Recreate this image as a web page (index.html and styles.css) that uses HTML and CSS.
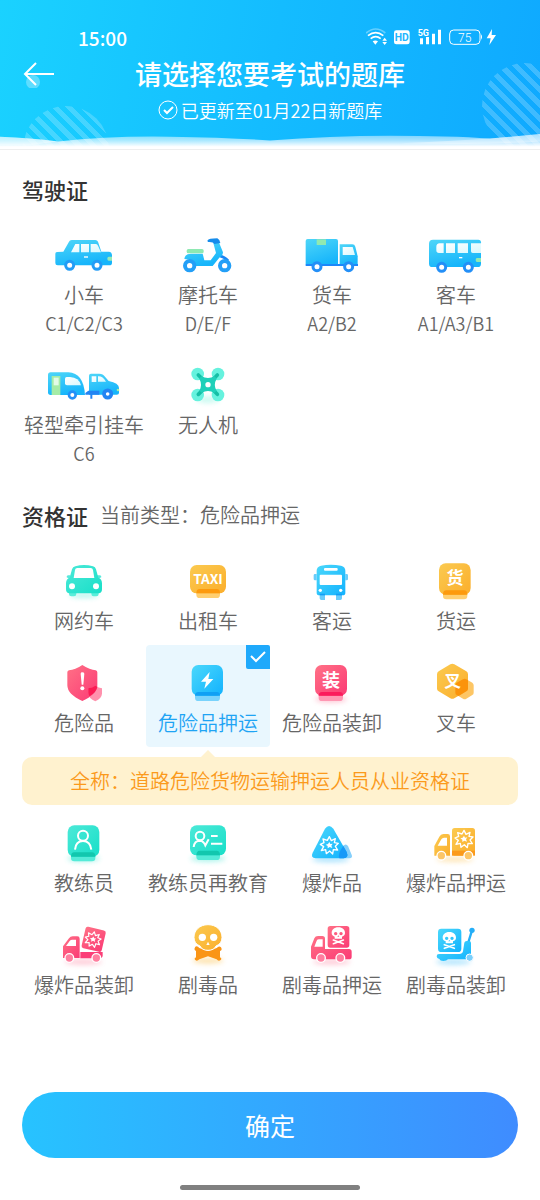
FILE: index.html
```html
<!DOCTYPE html>
<html lang="zh-CN">
<head>
    <meta charset="UTF-8">
    <meta name="viewport" content="width=device-width, initial-scale=1.0">
    <title>选择题库</title>
    <link rel="stylesheet" href="styles.css">
</head>
<body>
    <!-- Shared gradients and glyphs -->
    <svg class="defs" width="0" height="0" aria-hidden="true">
        <defs>
            <linearGradient id="blue" x1="0" y1="0" x2="0.4" y2="1"><stop offset="0" stop-color="#4fd6f8"/><stop offset="1" stop-color="#17b5fb"/></linearGradient>
            <linearGradient id="sky" x1="0" y1="0" x2="1" y2="1"><stop offset="0" stop-color="#4bd8fb"/><stop offset="1" stop-color="#12b2fe"/></linearGradient>
            <linearGradient id="teal" x1="0" y1="0" x2="1" y2="1"><stop offset="0" stop-color="#4ce9d8"/><stop offset="1" stop-color="#18dfc8"/></linearGradient>
            <linearGradient id="gold" x1="0" y1="0" x2="1" y2="1"><stop offset="0" stop-color="#fbca50"/><stop offset="1" stop-color="#fbae2c"/></linearGradient>
            <linearGradient id="red" x1="0" y1="0" x2="1" y2="1"><stop offset="0" stop-color="#ff7186"/><stop offset="1" stop-color="#fb3a75"/></linearGradient>
            <linearGradient id="glass" x1="0" y1="0" x2="1" y2="1"><stop offset="0" stop-color="#fff"/><stop offset="1" stop-color="#d8f8fd"/></linearGradient>
            <filter id="soft" x="-50%" y="-100%" width="200%" height="300%"><feGaussianBlur stdDeviation="8"/></filter>
            <g id="burst">
                <path d="M0-26 6-14 18-20 15-8 27-6 18 3 25 14 12 13 10 26 1 17-9 25-11 13-24 16-17 4-27-3-16-8-19-19-6-15Z" fill="none" stroke="#fff" stroke-width="4" stroke-linejoin="round"/>
                <path d="M0-10 3-4 10-5 6 1 9 8 1 5-5 9-5 2-11-2-4-4Z" fill="#fff"/>
            </g>
            <g id="skull">
                <path fill="#fff" fill-rule="evenodd" d="M0-20C13-20 20-12 20-3Q20 5 11 8V14H-11V8Q-20 5-20-3C-20-12-13-20 0-20ZM-8-6a5 5 0 1 0 .1 0ZM8-6a5 5 0 1 0 .1 0ZM0 4-3 8H3Z"/>
                <path d="M-15 18 15 29M15 18-15 29" stroke="#fff" stroke-width="5" stroke-linecap="round"/>
            </g>
        </defs>
    </svg>

    <header class="header">
        <span class="circle circle-left"></span>
        <span class="circle circle-right"></span>
        <svg class="wave" viewBox="0 0 540 18" preserveAspectRatio="none" aria-hidden="true">
            <defs>
                <linearGradient id="foam" x1="0" y1="0" x2="0" y2="1"><stop offset="0.1" stop-color="#fff" stop-opacity="0.45"/><stop offset="0.45" stop-color="#fff" stop-opacity="0.65"/><stop offset="0.85" stop-color="#fff"/></linearGradient>
            </defs>
            <path d="M0 5Q30 6 58 10Q110 4 170 5Q230 6 270 9Q330 4 390 4Q450 4 490 7L540 2V18H0Z" fill="url(#foam)"/>
            <path d="M0 5Q30 6 58 10L30 14H0ZM400 12Q450 10 490 7L540 2V10Q480 14 400 12Z" fill="#fff" opacity="0.4"/>
        </svg>
        <div class="status-bar">
            <span class="time">15:00</span>
            <svg width="132" height="20" viewBox="288 78 396 60" role="img" aria-label="状态">
                <g fill="none" stroke="#fff" stroke-width="5">
                    <path d="M288 96Q317 72 346 96" opacity="0.35"/>
                    <path d="M294 104Q317 86 340 104M302 113Q317 101 332 113"/>
                </g>
                <path d="M308 121Q316 116 324 121L316 131ZM337 119 344 110 351 119ZM337 123H351L344 132Z" fill="#fff"/>
                <rect x="372" y="88" width="47" height="42" rx="7" fill="#fff"/>
                <text class="status-text" x="395" y="121" font-size="31" font-weight="700" fill="#22b5ff">HD</text>
                <text class="status-text" x="460" y="104" font-size="27" font-weight="700" fill="#fff">5G</text>
                <path d="M450 112h9v18h-9zM468 108h9v22h-9zM486 98h9v32h-9zM504 86h9v44h-9z" fill="#fff"/>
                <rect x="539" y="87" width="91" height="43" rx="12" fill="none" stroke="#fff" stroke-width="3"/>
                <path d="M633 100q6 8 0 16z" fill="#fff"/>
                <text class="status-text" x="584" y="122" font-size="36" fill="#fff">75</text>
                <path d="M666 84 650 112H662L658 132 678 102H665Z" fill="#fff"/>
            </svg>
        </div>
        <div class="title-row">
            <a class="back" href="#" aria-label="返回">
                <svg width="32" height="28" viewBox="0 0 32 28">
                    <circle cx="10" cy="22" r="7" fill="#fff" opacity="0.3"/>
                    <path d="M13 3 2 14 13 25M2 14H31" fill="none" stroke="#fff" stroke-width="2"/>
                </svg>
            </a>
            <h1>请选择您要考试的题库</h1>
        </div>
        <p class="update">
            <svg width="20" height="20" viewBox="0 0 20 20" aria-hidden="true">
                <circle cx="10" cy="10" r="9" fill="none" stroke="#fff" stroke-width="1"/>
                <path d="M6 10 9 13 15 7" fill="none" stroke="#fff" stroke-width="2"/>
            </svg>
            已更新至01月22日新题库
        </p>
    </header>

    <main>
        <section>
            <h2>驾驶证</h2>
            <div class="grid">
                <button type="button" class="item">
                    <svg class="icon" viewBox="72 24 240 132" aria-hidden="true">
                        <path d="M106 86Q106 82 111 81L130 80 147 50Q149 45 155 45H226Q232 45 234 50L244 80H266Q276 81 276 91V113Q276 121 268 121H113Q106 121 106 114Z" fill="url(#blue)"/>
                        <path d="M166 57H178V82H153ZM183 57H207V82H183ZM212 57H228Q232 57 234 62L243 82H212Z" fill="url(#glass)"/>
                        <path d="M192 94H204V98H192Z" fill="#fff"/>
                        <path d="M276 95V107H266Q262 107 262 101T266 95Z" fill="#98e9b6"/>
                        <circle cx="149" cy="121" r="12" fill="#fff" stroke="#239cf6" stroke-width="9"/>
                        <circle cx="231" cy="121" r="12" fill="#fff" stroke="#239cf6" stroke-width="9"/>
                    </svg>
                    <span class="name">小车</span>
                    <span class="code">C1/C2/C3</span>
                </button>
                <button type="button" class="item">
                    <svg class="icon" viewBox="444 24 240 132" aria-hidden="true">
                        <path d="M598 92Q614 96 624 108" fill="none" stroke="#1885f5" stroke-width="9"/>
                        <path d="M493 102Q495 86 513 86H548L553 106H572L588 84 580 54 596 50 609 82Q609 92 599 97L578 123H527Q521 102 493 102Z" fill="url(#blue)"/>
                        <rect x="500" y="72" width="51" height="13" rx="5" fill="#8ee9b2"/>
                        <path d="M562 47Q566 40 592 40Q601 45 601 54L583 57Q580 50 564 51Z" fill="#168ceb"/>
                        <circle cx="509" cy="122" r="14" fill="#fff" stroke="#239ff7" stroke-width="12"/>
                        <circle cx="614" cy="122" r="14" fill="#fff" stroke="#239ff7" stroke-width="12"/>
                    </svg>
                    <span class="name">摩托车</span>
                    <span class="code">D/E/F</span>
                </button>
                <button type="button" class="item">
                    <svg class="icon" viewBox="66 24 240 132" aria-hidden="true">
                        <rect x="107" y="42" width="97" height="80" rx="6" fill="url(#blue)"/>
                        <path d="M209 58H247Q254 58 256 65L263 94V122H209Z" fill="url(#blue)"/>
                        <path d="M218 66H248L255 90H218Z" fill="url(#glass)"/>
                        <path d="M140 43H168V60H140Z" fill="#91e9b0"/>
                        <path d="M107 117H264V123H107Z" fill="#1c87fa"/>
                        <circle cx="141" cy="125" r="12" fill="#fff" stroke="#238ff7" stroke-width="9"/>
                        <circle cx="236" cy="125" r="12" fill="#fff" stroke="#238ff7" stroke-width="9"/>
                    </svg>
                    <span class="name">货车</span>
                    <span class="code">A2/B2</span>
                </button>
                <button type="button" class="item">
                    <svg class="icon" viewBox="438 24 240 132" aria-hidden="true">
                        <path d="M489 44H625Q633 44 633 52V116Q633 126 623 126H487Q477 126 477 116V56Q477 44 489 44Z" fill="url(#blue)"/>
                        <path d="M509 55H521V84H507Q499 84 499 76V66Q499 55 509 55ZM528 55H555V84H528ZM563 55H594V84H563ZM603 55H633V84H608Q603 84 603 79Z" fill="url(#glass)"/>
                        <path d="M567 96H577V100H567Z" fill="#fff"/>
                        <path d="M633 99V111H621Q617 111 617 105T621 99Z" fill="#91e9b0"/>
                        <circle cx="515" cy="127" r="12" fill="#fff" stroke="#238ff7" stroke-width="9"/>
                        <circle cx="595" cy="127" r="12" fill="#fff" stroke="#238ff7" stroke-width="9"/>
                    </svg>
                    <span class="name">客车</span>
                    <span class="code">A1/A3/B1</span>
                </button>
                <button type="button" class="item">
                    <svg class="icon" viewBox="72 24 240 132" aria-hidden="true">
                        <path d="M92 52H145Q191 54 195 120H92Q84 120 84 112V60Q84 52 92 52Z" fill="url(#blue)"/>
                        <path d="M95 63H121V120H95Z" fill="#a5eca7"/>
                        <path d="M101 68H116V91H101Z" fill="#e2fbe6"/>
                        <path d="M140 66H150Q177 67 183 91H141Q135 91 135 85V71Q135 66 140 66Z" fill="url(#glass)"/>
                        <path d="M213 56H238Q249 56 255 65L266 78Q297 84 297 99V114Q297 119 290 119H207V62Q207 56 213 56Z" fill="url(#blue)"/>
                        <path d="M215 64H229V81H215ZM234 64Q248 63 258 80H234Z" fill="url(#glass)"/>
                        <path d="M196 119V114L205 107H238V119H217V131H211V119Z" fill="#2384f3"/>
                        <circle cx="294" cy="105" r="4" fill="#a5eca7"/>
                        <circle cx="157" cy="120" r="10" fill="#fff" stroke="#238ff7" stroke-width="8"/>
                        <circle cx="263" cy="117" r="11" fill="#fff" stroke="#2384f3" stroke-width="11"/>
                    </svg>
                    <span class="name">轻型牵引挂车</span>
                    <span class="code">C6</span>
                </button>
                <button type="button" class="item">
                    <svg class="icon" viewBox="444 24 240 132" aria-hidden="true">
                        <ellipse cx="564" cy="134" rx="34" ry="10" fill="#7df3dc" opacity="0.4" filter="url(#soft)"/>
                        <g fill="#66f2de">
                            <circle cx="533" cy="57" r="19"/><circle cx="594" cy="57" r="19"/>
                            <circle cx="533" cy="120" r="19"/><circle cx="594" cy="120" r="19"/>
                        </g>
                        <path d="M535 60 564 89 592 60M535 118 564 89 592 118" fill="none" stroke="#15bfa6" stroke-width="11" stroke-linecap="round"/>
                        <path d="M544 64Q564 74 584 64L590 71Q579 89 590 107L583 113Q564 103 545 113L538 107Q548 89 538 71Z" fill="#1fd0b9"/>
                        <circle cx="564" cy="89" r="8" fill="#fff"/>
                    </svg>
                    <span class="name">无人机</span>
                </button>
            </div>
        </section>

        <section>
            <h2>资格证 <small>当前类型：危险品押运</small></h2>
            <div class="grid">
                <button type="button" class="item">
                    <svg class="icon" viewBox="72 27 240 132" aria-hidden="true">
                        <ellipse cx="192" cy="136" rx="44" ry="8" fill="#4fe8d5" opacity="0.4" filter="url(#soft)"/>
                        <path d="M147 122H169V132Q169 139 162 139H154Q147 139 147 132ZM214 122H236V132Q236 139 229 139H221Q214 139 214 132Z" fill="#5aeeda"/>
                        <path d="M152 76H145Q139 76 140 82L149 87ZM230 76H239Q245 76 244 82L234 87Z" fill="#58e9dc"/>
                        <path d="M166 49Q192 41 219 49Q226 51 228 58L235 83Q246 87 246 100V118Q246 129 236 130H148Q138 129 138 118V100Q138 87 149 83L156 58Q158 51 166 49Z" fill="url(#teal)"/>
                        <path d="M172 54H212Q218 54 219 60L223 84H161L165 60Q166 54 172 54Z" fill="#fff"/>
                        <circle cx="156" cy="109" r="9" fill="#fff"/><circle cx="228" cy="109" r="9" fill="#fff"/>
                    </svg>
                    <span class="name">网约车</span>
                </button>
                <button type="button" class="item">
                    <svg class="icon" viewBox="444 27 240 132" aria-hidden="true">
                        <rect x="529" y="112" width="71" height="32" rx="10" fill="#ffcf70"/>
                        <rect x="510" y="45" width="108" height="85" rx="20" fill="url(#gold)"/>
                        <path d="M539 117H590Q600 117 600 130H529Q529 117 539 117Z" fill="#fd9a0d"/>
                        <text class="icon-text" x="564" y="102" font-size="41">TAXI</text>
                    </svg>
                    <span class="name">出租车</span>
                </button>
                <button type="button" class="item">
                    <svg class="icon" viewBox="66 27 240 132" aria-hidden="true">
                        <path d="M131 76Q131 72 135 72H140V91H135Q131 91 131 87ZM226 72H230Q234 72 234 76V87Q234 91 230 91H226ZM149 130H165V150H154Q149 150 149 145ZM198 130H216V145Q216 150 211 150H198Z" fill="#69ccfb"/>
                        <path d="M153 47Q182 41 213 47Q226 50 226 62V128Q226 136 218 136H148Q140 136 140 128V62Q140 50 153 47Z" fill="url(#sky)"/>
                        <path d="M149 131H165V136H149ZM198 131H216V136H198Z" fill="#119df6"/>
                        <rect x="162" y="54" width="41" height="8" rx="3" fill="#fff"/>
                        <rect x="149" y="74" width="67" height="31" rx="3" fill="#fff"/>
                        <circle cx="151" cy="121" r="5" fill="#fff"/><circle cx="212" cy="121" r="5" fill="#fff"/>
                    </svg>
                    <span class="name">客运</span>
                </button>
                <button type="button" class="item">
                    <svg class="icon" viewBox="438 27 240 132" aria-hidden="true">
                        <rect x="519" y="112" width="73" height="36" rx="10" fill="#ffcf70"/>
                        <rect x="507" y="40" width="95" height="94" rx="20" fill="url(#gold)"/>
                        <path d="M529 121H582Q592 121 592 134H519Q519 121 529 121Z" fill="#fd9a0d"/>
                        <text class="icon-text" x="555" y="103" font-size="51">货</text>
                    </svg>
                    <span class="name">货运</span>
                </button>

                <button type="button" class="item">
                    <svg class="icon" viewBox="72 63 240 132" aria-hidden="true">
                        <path d="M187 75Q210 90 227 91Q232 92 232 97V136Q232 163 187 183Q142 163 142 136V97Q142 92 147 91Q165 90 187 75Z" fill="url(#red)"/>
                        <path d="M226 137Q236 143 246 145V161Q245 175 226 184Q206 175 205 161V145Q217 143 226 137Z" fill="#ff6c91" opacity="0.75"/>
                        <path d="M226 137Q230 139 232 140Q230 155 209 169Q205 165 205 158V145Q217 143 226 137Z" fill="#fb1b54"/>
                        <path d="M182 101Q182 97 187 97T193 101L190 134H185Z" fill="#fff"/>
                        <circle cx="187" cy="145" r="6" fill="#fff"/>
                    </svg>
                    <span class="name">危险品</span>
                </button>
                <button type="button" class="item selected" aria-pressed="true">
                    <span class="check">
                        <svg width="16" height="12" viewBox="0 0 16 12"><path d="M1 5 6 10 15 1" fill="none" stroke="#fff" stroke-width="2"/></svg>
                    </span>
                    <svg class="icon" viewBox="444 63 240 132" aria-hidden="true">
                        <rect x="525" y="145" width="75" height="38" rx="10" fill="#7ad3fc"/>
                        <rect x="515" y="75" width="94" height="92" rx="20" fill="url(#sky)"/>
                        <path d="M535 156H590Q600 156 600 167H525Q525 156 535 156Z" fill="#10a0f4"/>
                        <path d="M569 96 543 125H558L553 146 580 117H565Z" fill="#fff"/>
                    </svg>
                    <span class="name">危险品押运</span>
                </button>
                <button type="button" class="item">
                    <svg class="icon" viewBox="66 63 240 132" aria-hidden="true">
                        <ellipse cx="183" cy="178" rx="48" ry="10" fill="#ff7a9a" opacity="0.4" filter="url(#soft)"/>
                        <rect x="146" y="145" width="73" height="38" rx="10" fill="#ff97b3"/>
                        <rect x="135" y="75" width="96" height="92" rx="20" fill="url(#red)"/>
                        <path d="M156 156H209Q219 156 219 167H146Q146 156 156 156Z" fill="#fb1b5c"/>
                        <text class="icon-text" x="183" y="141" font-size="54">装</text>
                    </svg>
                    <span class="name">危险品装卸</span>
                </button>
                <button type="button" class="item">
                    <svg class="icon" viewBox="438 63 240 132" aria-hidden="true">
                        <path d="M541 73Q547 70 553 73L589 94Q594 97 594 103V146Q594 151 589 154L553 175Q547 178 541 175L506 154Q501 151 501 146V103Q501 97 506 94Z" fill="url(#gold)"/>
                        <path d="M579 118Q584 115 589 118L607 128Q611 131 611 136V158Q611 163 607 165L589 176Q584 179 579 176L560 165Q556 163 556 158V136Q556 131 560 128Z" fill="#fcb83e" opacity="0.8"/>
                        <path d="M579 118Q584 115 589 118L594 121V146Q594 151 589 154L566 168 560 165Q556 163 556 158V136Q556 131 560 128Z" fill="#fb930b"/>
                        <text class="icon-text" x="548" y="142" font-size="50">叉</text>
                    </svg>
                    <span class="name">叉车</span>
                </button>

                <p class="full-name">全称：道路危险货物运输押运人员从业资格证</p>

                <button type="button" class="item">
                    <svg class="icon" viewBox="72 15 240 132" aria-hidden="true">
                        <ellipse cx="190" cy="128" rx="48" ry="10" fill="#4fe8d5" opacity="0.45" filter="url(#soft)"/>
                        <rect x="153" y="98" width="73" height="38" rx="10" fill="#55ebd8"/>
                        <rect x="143" y="28" width="95" height="94" rx="20" fill="url(#teal)"/>
                        <path d="M163 109H216Q226 109 226 122H153Q153 109 163 109Z" fill="#12c7ae"/>
                        <circle cx="189" cy="59" r="15" fill="none" stroke="#fff" stroke-width="6"/>
                        <path d="M165 101Q167 75 189 75T214 101" fill="none" stroke="#fff" stroke-width="6"/>
                    </svg>
                    <span class="name">教练员</span>
                </button>
                <button type="button" class="item">
                    <svg class="icon" viewBox="444 15 240 132" aria-hidden="true">
                        <ellipse cx="564" cy="128" rx="52" ry="10" fill="#4fe8d5" opacity="0.45" filter="url(#soft)"/>
                        <rect x="529" y="98" width="71" height="34" rx="10" fill="#55ebd8"/>
                        <rect x="510" y="28" width="108" height="90" rx="20" fill="url(#teal)"/>
                        <path d="M539 104H590Q600 104 600 118H529Q529 104 539 104Z" fill="#12c7ae"/>
                        <circle cx="540" cy="60" r="13" fill="none" stroke="#fff" stroke-width="6"/>
                        <path d="M521 93Q523 74 540 74Q551 75 556 88L566 70M573 60H593M573 83H607" fill="none" stroke="#fff" stroke-width="6"/>
                    </svg>
                    <span class="name">教练员再教育</span>
                </button>
                <button type="button" class="item">
                    <svg class="icon" viewBox="66 15 240 132" aria-hidden="true">
                        <ellipse cx="182" cy="130" rx="56" ry="9" fill="#4fc4fb" opacity="0.45" filter="url(#soft)"/>
                        <path d="M210 100 222 88Q228 82 234 90L245 116Q249 126 238 127H210Z" fill="#85cffb"/>
                        <path d="M165 38Q177 22 190 38L230 108Q237 125 221 127H137Q121 125 128 110Z" fill="url(#sky)"/>
                        <path d="M220 90 230 108Q237 125 221 127H208Q203 112 220 90Z" fill="#1799f8"/>
                        <use href="#burst" x="178" y="88"/>
                    </svg>
                    <span class="name">爆炸品</span>
                </button>
                <button type="button" class="item">
                    <svg class="icon" viewBox="438 15 240 132" aria-hidden="true">
                        <ellipse cx="555" cy="130" rx="56" ry="8" fill="#fcc04a" opacity="0.4" filter="url(#soft)"/>
                        <path fill="url(#gold)" fill-rule="evenodd" d="M493 119V90L508 62Q512 54 520 54H533Q540 54 540 61V119ZM503 89H531V65H522Q517 65 514 70Z"/>
                        <rect x="546" y="36" width="69" height="83" rx="8" fill="url(#gold)"/>
                        <path d="M546 104H615V119H546Z" fill="#fb9a1b"/>
                        <use href="#burst" x="582" y="69"/>
                        <circle cx="514" cy="119" r="13" fill="#fcc667" stroke="#fff" stroke-width="4"/>
                        <circle cx="595" cy="119" r="13" fill="#fcc667" stroke="#fff" stroke-width="4"/>
                    </svg>
                    <span class="name">爆炸品押运</span>
                </button>

                <button type="button" class="item">
                    <svg class="icon" viewBox="72 321 240 132" aria-hidden="true">
                        <ellipse cx="190" cy="438" rx="56" ry="8" fill="#ff7a9a" opacity="0.4" filter="url(#soft)"/>
                        <path fill="url(#red)" fill-rule="evenodd" d="M129 426V391L147 367Q151 361 158 361H172Q179 361 179 368V426ZM138 390H168V371H157Q152 371 149 375Z"/>
                        <path d="M181 408H248V418Q248 427 239 427H181Z" fill="#fb3f78"/>
                        <rect x="190" y="337" width="62" height="66" rx="7" fill="url(#red)" transform="rotate(13 221 370)"/>
                        <use href="#burst" transform="translate(219 370) rotate(10) scale(0.88)"/>
                        <circle cx="148" cy="426" r="13" fill="#ff7e9f" stroke="#fff" stroke-width="4"/>
                        <circle cx="229" cy="426" r="13" fill="#ff7e9f" stroke="#fff" stroke-width="4"/>
                    </svg>
                    <span class="name">爆炸品装卸</span>
                </button>
                <button type="button" class="item">
                    <svg class="icon" viewBox="444 321 240 132" aria-hidden="true">
                        <ellipse cx="564" cy="434" rx="46" ry="9" fill="#fcc04a" opacity="0.45" filter="url(#soft)"/>
                        <path d="M526 392Q532 388 538 396L564 405 590 396Q597 388 603 394Q608 403 600 405V424Q607 428 602 432Q595 437 590 430L564 421 538 430Q531 437 526 432Q521 428 528 424V405Q520 401 526 392Z" fill="#fa9516"/>
                        <path fill="url(#gold)" stroke="#fff" stroke-width="3" d="M564 326C590 326 606 344 606 364Q606 383 588 390Q582 403 564 403T540 390Q522 383 522 364C522 344 538 326 564 326Z"/>
                        <circle cx="547" cy="364" r="11" fill="#fff"/><circle cx="581" cy="364" r="11" fill="#fff"/>
                        <path d="M564 377 569 387H559Z" fill="#fff"/>
                    </svg>
                    <span class="name">剧毒品</span>
                </button>
                <button type="button" class="item">
                    <svg class="icon" viewBox="66 321 240 132" aria-hidden="true">
                        <ellipse cx="185" cy="438" rx="56" ry="8" fill="#ff7a9a" opacity="0.4" filter="url(#soft)"/>
                        <path fill="url(#red)" fill-rule="evenodd" d="M123 421V392L133 367Q136 360 144 360H157Q165 360 165 368V399H237Q245 399 245 407V422Q245 430 237 430H132Q123 430 123 421ZM133 392H158V370H147Q142 370 140 374Z"/>
                        <rect x="173" y="330" width="65" height="65" rx="8" fill="url(#red)"/>
                        <use href="#skull" x="205" y="354"/>
                        <circle cx="153" cy="426" r="13" fill="#ff7e9f" stroke="#fff" stroke-width="4"/>
                        <circle cx="211" cy="426" r="13" fill="#ff7e9f" stroke="#fff" stroke-width="4"/>
                    </svg>
                    <span class="name">剧毒品押运</span>
                </button>
                <button type="button" class="item">
                    <svg class="icon" viewBox="438 321 240 132" aria-hidden="true">
                        <ellipse cx="550" cy="438" rx="52" ry="8" fill="#4fc4fb" opacity="0.45" filter="url(#soft)"/>
                        <path d="M594 382 606 343" stroke="#24aef8" stroke-width="7"/>
                        <circle cx="606" cy="343" r="8" fill="#24aef8"/>
                        <path d="M507 414H568Q577 414 579 406L583 380Q584 375 590 375H597Q603 375 603 381V430H534Q530 435 520 435T508 429Q500 428 500 421T507 414Z" fill="url(#sky)"/>
                        <rect x="504" y="338" width="70" height="70" rx="10" fill="url(#sky)"/>
                        <use href="#skull" x="538" y="368"/>
                        <circle cx="599" cy="425" r="11" fill="#7bd0fc" stroke="#fff" stroke-width="3"/>
                    </svg>
                    <span class="name">剧毒品装卸</span>
                </button>
            </div>
        </section>
    </main>

    <footer>
        <button type="button" class="confirm">确定</button>
        <div class="home-bar"></div>
    </footer>
</body>
</html>
```

FILE: styles.css
```css
* {
    box-sizing: border-box;
}
body {
    display: flex;
    flex-direction: column;
    min-height: 100vh;
    margin: 0;
    font-family: 'Noto Sans CJK SC', sans-serif;
    font-weight: 350;
    color: #666;
    background-color: #fff;
}
h1, h2, p {
    margin: 0;
}
button {
    padding: 0;
    border: none;
    background: none;
    font: inherit;
    color: inherit;
    cursor: pointer;
}
.defs {
    position: absolute;
}

/* Header */
.header {
    position: relative;
    overflow: hidden;
    padding: 24px 0 27px;
    border-bottom: 1px solid #eee;
    background: linear-gradient(100deg, #1ad2ff 0%, #14bcff 50%, #0fa9ff 100%);
    color: #fff;
}
.circle {
    position: absolute;
    width: 86px;
    height: 86px;
    border-radius: 50%;
    background: repeating-linear-gradient(45deg, rgba(255, 255, 255, 0.2) 0 5px, transparent 5px 10px);
}
.circle-left {
    left: 23px;
    bottom: -43px;
}
.circle-right {
    right: -28px;
    bottom: 0;
}
.wave {
    position: absolute;
    left: 0;
    bottom: 0;
    width: 100%;
    height: 17px;
}
.status-bar {
    display: flex;
    align-items: center;
    justify-content: space-between;
    height: 26px;
    padding: 0 42px 0 78px;
}
.time {
    font-size: 19px;
    font-weight: 500;
}
.status-text {
    font-family: Roboto, sans-serif;
    text-anchor: middle;
}
.title-row {
    display: grid;
    grid-template-columns: 1fr auto 1fr;
    align-items: center;
    height: 48px;
    padding: 0 23px;
}
.back {
    display: flex;
}
.title-row h1 {
    font-size: 27px;
    font-weight: 500;
    line-height: 40px;
}
.update {
    display: flex;
    align-items: center;
    justify-content: center;
    gap: 3px;
    font-size: 18px;
    line-height: 24px;
}

/* Sections */
main {
    padding: 1px 22px 0;
}
h2 {
    display: flex;
    align-items: center;
    gap: 12px;
    margin: 22px 0 12px;
    font-size: 22px;
    font-weight: 500;
    line-height: 32px;
    color: #333;
}
h2 small {
    font-size: 20px;
    font-weight: 350;
    color: #666;
}
.grid {
    display: grid;
    grid-template-columns: repeat(4, 1fr);
}
.item {
    position: relative;
    display: flex;
    flex-direction: column;
    align-items: center;
    padding: 16px 0 10px;
    border-radius: 4px;
}
.icon {
    width: 80px;
    height: 44px;
    margin-bottom: 4px;
    overflow: visible;
}
.icon-text {
    font-family: 'Noto Sans CJK SC', sans-serif;
    font-weight: 700;
    text-anchor: middle;
    fill: #fff;
}
.name {
    font-size: 20px;
    line-height: 28px;
    white-space: nowrap;
}
.code {
    font-size: 18px;
    line-height: 28px;
}
.selected {
    background-color: #e9f7fe;
    color: #1fa4f4;
}
.check {
    position: absolute;
    top: 0;
    right: 0;
    display: flex;
    align-items: center;
    justify-content: center;
    width: 24px;
    height: 24px;
    border-radius: 0 2px 0 2px;
    background-color: #1fa9fb;
}

/* Full name of the selected certificate */
.full-name {
    position: relative;
    grid-column: 1 / -1;
    margin-top: 10px;
    border-radius: 10px;
    background-color: #fff2cf;
    font-size: 20px;
    line-height: 48px;
    text-align: center;
    color: #fb9a1c;
}
.full-name::before {
    content: '';
    position: absolute;
    top: -7px;
    left: 37.5%;
    margin-left: -8px;
    border: 8px solid transparent;
    border-top: none;
    border-bottom-color: #fff2cf;
}

/* Bottom */
footer {
    margin-top: auto;
    padding: 20px 22px 10px;
}
.confirm {
    display: block;
    width: 100%;
    height: 66px;
    border-radius: 33px;
    background: linear-gradient(90deg, #27c3ff, #3f8cff);
    color: #fff;
    font-size: 25px;
    font-weight: 400;
}
.home-bar {
    width: 180px;
    height: 5px;
    margin: 27px auto 0;
    border-radius: 3px;
    background-color: #808080;
}
```
